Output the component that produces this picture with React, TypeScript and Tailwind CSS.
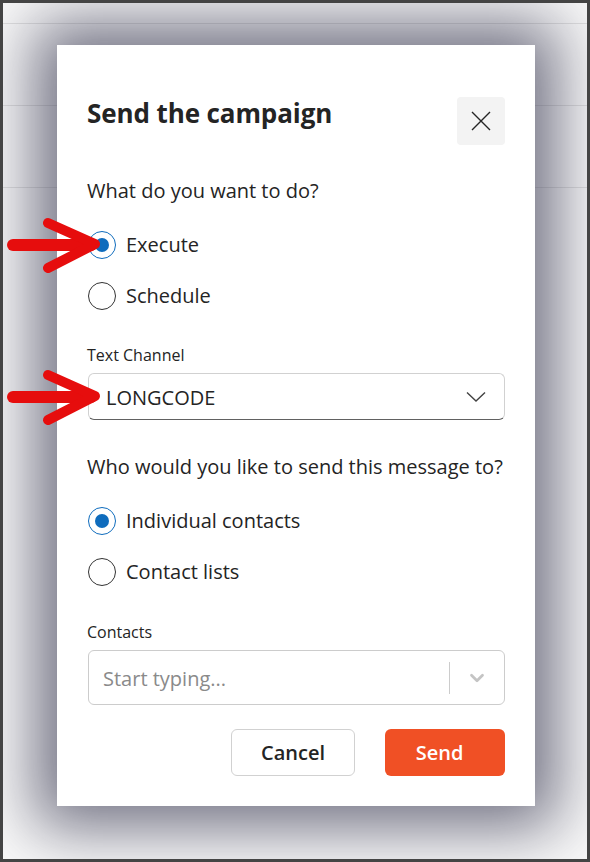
import { ChevronDown } from "lucide-react";

function Radio({ checked, label }: { checked?: boolean; label: string }) {
  return (
    <div className="flex items-center h-[28px]">
      <span
        className={
          checked
            ? "w-[28px] h-[28px] rounded-full border border-[#0f6cbd] flex items-center justify-center"
            : "w-[28px] h-[28px] rounded-full border border-[#333] flex items-center justify-center"
        }
      >
        {checked && <span className="w-[14px] h-[14px] rounded-full bg-[#0f6cbd]" />}
      </span>
      <span className="ml-[10px] text-[20px] leading-[28px] text-[#242424]">{label}</span>
    </div>
  );
}

function Arrow({ top }: { top: number }) {
  return (
    <svg
      className="absolute left-0"
      style={{ top }}
      width="100"
      height="60"
      viewBox="0 0 100 60"
      fill="none"
      stroke="#e60d0d"
      strokeLinecap="round"
      strokeLinejoin="round"
    >
      <path d="M10 30 H88" strokeWidth="12" />
      <path d="M45 8 L92 29 L45 53" strokeWidth="10" />
    </svg>
  );
}

export default function App() {
  return (
    <div
      className="relative w-[590px] h-[862px] border-[3px] border-[#444] bg-[#fafafa] overflow-hidden"
      style={{ fontFamily: '"Open Sans", "Noto Sans", sans-serif' }}
    >
      {/* page behind the dialog */}
      <div className="flex flex-col">
        <div className="h-[21px] border-b border-[#e1e1e1]" />
        <div className="h-[82px] border-b border-[#e1e1e1]" />
        <div className="h-[82px] border-b border-[#e1e1e1]" />
      </div>

      {/* dialog */}
      <div className="absolute left-[54px] top-[42px] w-[478px] h-[761px] bg-white shadow-[0_0_60px_22px_rgba(55,55,80,0.7)] px-[30px] pt-[52px] pb-[30px] flex flex-col text-[#242424]">
        <div className="flex justify-between items-start">
          <h2 className="text-[26px] leading-[32px] font-bold tracking-[-0.1px]">Send the campaign</h2>
          <button className="w-[48px] h-[48px] rounded-[4px] bg-[#f3f3f3] flex items-center justify-center">
            <svg width="20" height="20" viewBox="0 0 20 20" stroke="#242424" strokeWidth="1.4">
              <path d="M1 1 L19 19 M19 1 L1 19" />
            </svg>
          </button>
        </div>

        <p className="mt-[32px] text-[20px] leading-[28px]">What do you want to do?</p>
        <div className="mt-[26px] flex flex-col gap-[23px] pl-[1px]">
          <Radio checked label="Execute" />
          <Radio label="Schedule" />
        </div>

        <p className="mt-[35px] text-[16px] leading-[20px]">Text Channel</p>
        <div className="mt-[8px] h-[47px] ml-[1px] rounded-[6px] border border-[#d1d1d1] border-b-[#616161] flex items-center justify-between pl-[17px] pr-[18px]">
          <span className="text-[20px] leading-[28px] pt-[3px] text-[#242424]">LONGCODE</span>
          <svg width="20" height="12" viewBox="0 0 20 12" fill="none" stroke="#424242" strokeWidth="1.4">
            <path d="M1 1.5 L10 10 L19 1.5" />
          </svg>
        </div>

        <p className="mt-[33px] text-[20px] leading-[28px]">Who would you like to send this message to?</p>
        <div className="mt-[26px] flex flex-col gap-[23px] pl-[1px]">
          <Radio checked label="Individual contacts" />
          <Radio label="Contact lists" />
        </div>

        <p className="mt-[36px] text-[16px] leading-[20px]">Contacts</p>
        <div className="mt-[8px] h-[55px] ml-[1px] rounded-[6px] border border-[#cccccc] flex items-center">
          <span className="flex-1 pl-[14px] text-[20px] leading-[28px] pt-[3px] text-[#8a8a8a]">Start typing...</span>
          <span className="w-px h-[32px] bg-[#cccccc]" />
          <span className="w-[54px] flex items-center justify-center">
            <ChevronDown size={22} strokeWidth={3} className="text-[#c4c4c4]" />
          </span>
        </div>

        <div className="mt-[24px] flex justify-end gap-[30px]">
          <button className="w-[124px] h-[47px] rounded-[6px] border border-[#d1d1d1] bg-white text-[20px] font-semibold text-[#242424]">
            Cancel
          </button>
          <button className="w-[120px] h-[47px] rounded-[6px] bg-[#f05025] pr-[11px] text-[20px] font-semibold text-white">
            Send
          </button>
        </div>
      </div>

      <Arrow top={212} />
      <Arrow top={364} />
    </div>
  );
}
